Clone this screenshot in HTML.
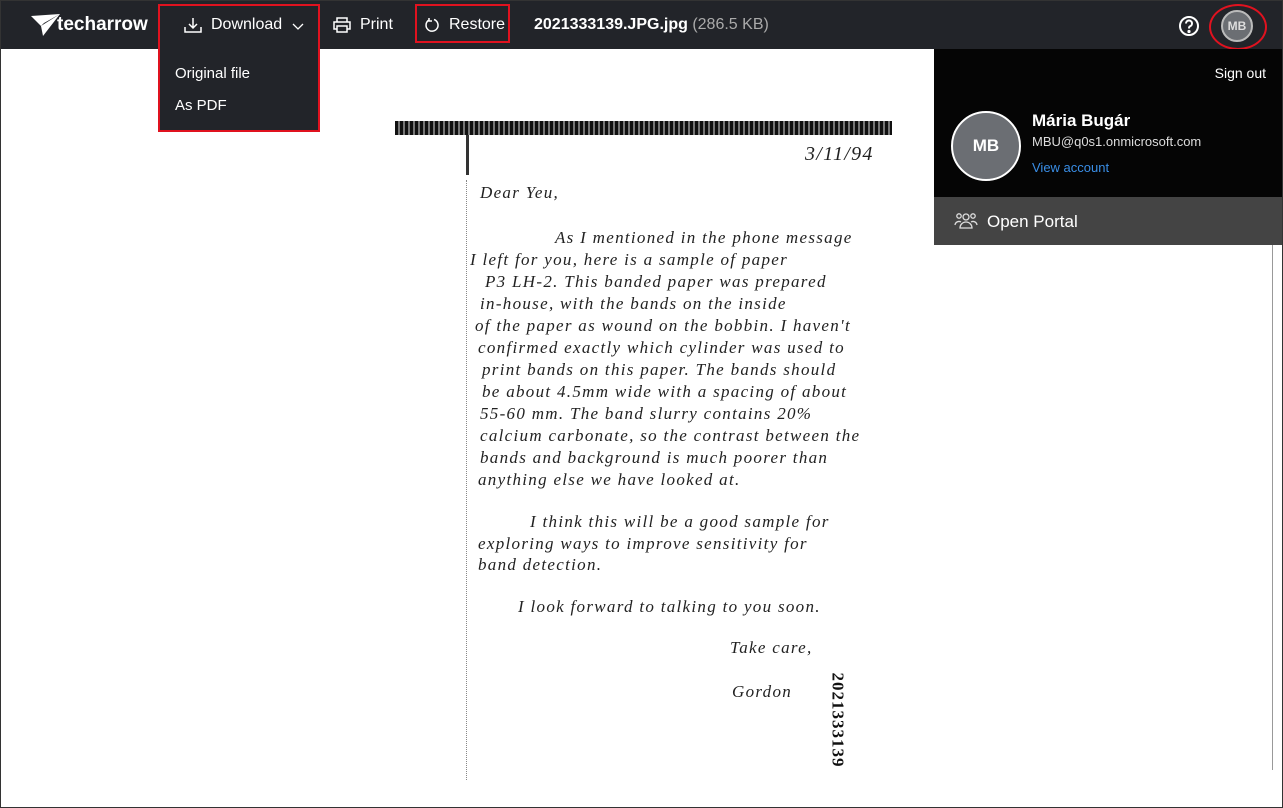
<!DOCTYPE html>
<html><head><meta charset="utf-8"><style>
body{margin:0;width:1283px;height:808px;overflow:hidden;background:#fff;font-family:"Liberation Sans",sans-serif;position:relative}
.frame{position:absolute;left:0;top:0;width:1281px;height:806px;border:1px solid #333;box-sizing:content-box}
.nav{position:absolute;left:1px;top:1px;width:1281px;height:48px;background:#222429;color:#fff}
.nav span{position:absolute;top:15px;font-size:16px}
.red{position:absolute;border:2px solid #e0121f;box-sizing:border-box}
.dd{position:absolute;left:160px;top:49px;width:158px;height:81px;background:#222429}
.dd div{position:absolute;left:15px;color:#fff;font-size:15px}
.panel{position:absolute;left:934px;top:49px;width:348px;height:148px;background:#050505;color:#fff}
.portal{position:absolute;left:934px;top:197px;width:348px;height:48px;background:#444}
.hw{position:absolute;font-family:"Liberation Serif",serif;font-style:italic;font-size:17px;color:#222;white-space:nowrap;letter-spacing:1.3px}
</style></head><body>
<div class="frame"></div>
<div class="nav">
<svg style="position:absolute;left:30px;top:13px" width="30" height="22" viewBox="0 0 30 22"><path d="M0 2L29 0L12 22L10 12Z" fill="#fff"/><path d="M10 12L29 0L13 9Z" fill="#222429"/></svg>
<span style="left:56px;top:13px;font-size:19px;font-weight:bold">techarrow</span>
<svg style="position:absolute;left:183px;top:16px" width="18" height="16" viewBox="0 0 18 16" fill="none" stroke="#fff" stroke-width="1.5"><path d="M9 1v10M5 7l4 4 4-4M1 10v5h16v-5"/></svg>
<span style="left:210px">Download</span>
<svg style="position:absolute;left:291px;top:22px" width="12" height="8" viewBox="0 0 12 8" fill="none" stroke="#fff" stroke-width="1.3"><path d="M1 1l5 5 5-5"/></svg>
<svg style="position:absolute;left:332px;top:16px" width="18" height="16" viewBox="0 0 18 16" fill="none" stroke="#fff" stroke-width="1.5"><path d="M4 5V1h10v4M4 12H1V5h16v7h-3M4 9h10v6H4z"/></svg>
<span style="left:359px">Print</span>
<svg style="position:absolute;left:423px;top:16px" width="16" height="16" viewBox="0 0 16 16" fill="none" stroke="#fff" stroke-width="1.5"><path d="M5 3a6 6 0 1 0 5-0.5M5 1v3h3"/></svg>
<span style="left:448px">Restore</span>
<span style="left:533px;font-weight:bold">2021333139.JPG.jpg <span style="position:static;font-weight:normal;color:#aaa">(286.5 KB)</span></span>
<svg style="position:absolute;left:1177px;top:14px" width="22" height="22" viewBox="0 0 22 22" fill="none" stroke="#fff" stroke-width="2"><circle cx="11" cy="11" r="9"/><path d="M8 8.5a3 3 0 1 1 4 2.8c-1 .4-1 1.2-1 2.2"/><circle cx="11" cy="16.5" r=".6" fill="#fff"/></svg>
<div style="position:absolute;left:1220px;top:9px;width:28px;height:28px;border-radius:50%;background:#6b6e73;border:2px solid #bbb;color:#ddd;font-size:12px;font-weight:bold;text-align:center;line-height:28px">MB</div>
</div>
<div style="position:absolute;left:1209px;top:4px;width:54px;height:42px;border:2px solid #e0121f;border-radius:50%"></div>
<div class="dd"><div style="top:16px">Original file</div><div style="top:48px">As PDF</div></div>
<div class="red" style="left:158px;top:4px;width:162px;height:128px"></div>
<div class="red" style="left:415px;top:4px;width:95px;height:39px"></div>
<div class="panel">
<div style="position:absolute;right:16px;top:16px;font-size:14px">Sign out</div>
<div style="position:absolute;left:17px;top:62px;width:66px;height:66px;border-radius:50%;background:#6b6e73;border:2px solid #fff;text-align:center;line-height:66px;font-weight:bold;font-size:17px">MB</div>
<div style="position:absolute;left:98px;top:62px;font-size:17px;font-weight:bold">Mária Bugár</div>
<div style="position:absolute;left:98px;top:85px;font-size:13px;color:#ddd">MBU@q0s1.onmicrosoft.com</div>
<div style="position:absolute;left:98px;top:111px;font-size:13px;color:#3a8ee6">View account</div>
</div>
<div class="portal">
<svg style="position:absolute;left:20px;top:14px" width="24" height="20" viewBox="0 0 24 20" fill="none" stroke="#ddd" stroke-width="1.3"><circle cx="12" cy="6" r="3"/><circle cx="5" cy="5" r="2.2"/><circle cx="19" cy="5" r="2.2"/><path d="M6 17a6 6 0 0 1 12 0zM1 14a4 4 0 0 1 6-3M23 14a4 4 0 0 0-6-3"/></svg>
<div style="position:absolute;left:53px;top:15px;color:#fff;font-size:17px">Open Portal</div>
</div>
<div style="position:absolute;left:1272px;top:245px;width:1px;height:525px;background:#999"></div>
<div style="position:absolute;left:395px;top:121px;width:497px;height:14px;background:repeating-linear-gradient(90deg,#111 0 3px,#777 3px 5px)"></div>
<div style="position:absolute;left:466px;top:135px;width:3px;height:40px;background:#333"></div>
<div style="position:absolute;left:466px;top:180px;width:1px;height:600px;border-left:1px dotted #888"></div>
<div class="hw" style="left:805px;top:143px;font-size:20px">3/11/94</div>
<div class="hw" style="left:480px;top:183px">Dear Yeu,</div>
<div class="hw" style="left:555px;top:228px">As I mentioned in the phone message</div>
<div class="hw" style="left:470px;top:250px">I left for you, here is a sample of paper</div>
<div class="hw" style="left:485px;top:272px">P3 LH-2. This banded paper was prepared</div>
<div class="hw" style="left:480px;top:294px">in-house, with the bands on the inside</div>
<div class="hw" style="left:475px;top:316px">of the paper as wound on the bobbin. I haven't</div>
<div class="hw" style="left:478px;top:338px">confirmed exactly which cylinder was used to</div>
<div class="hw" style="left:482px;top:360px">print bands on this paper. The bands should</div>
<div class="hw" style="left:482px;top:382px">be about 4.5mm wide with a spacing of about</div>
<div class="hw" style="left:480px;top:404px">55-60 mm. The band slurry contains 20%</div>
<div class="hw" style="left:480px;top:426px">calcium carbonate, so the contrast between the</div>
<div class="hw" style="left:480px;top:448px">bands and background is much poorer than</div>
<div class="hw" style="left:478px;top:470px">anything else we have looked at.</div>
<div class="hw" style="left:530px;top:512px">I think this will be a good sample for</div>
<div class="hw" style="left:478px;top:534px">exploring ways to improve sensitivity for</div>
<div class="hw" style="left:478px;top:555px">band detection.</div>
<div class="hw" style="left:518px;top:597px">I look forward to talking to you soon.</div>
<div class="hw" style="left:730px;top:638px">Take care,</div>
<div class="hw" style="left:732px;top:682px">Gordon</div>
<div style="position:absolute;left:790px;top:710px;transform:rotate(90deg);font-family:'Liberation Serif',serif;font-weight:bold;font-size:17px;color:#111;letter-spacing:1px">2021333139</div>
</body></html>
